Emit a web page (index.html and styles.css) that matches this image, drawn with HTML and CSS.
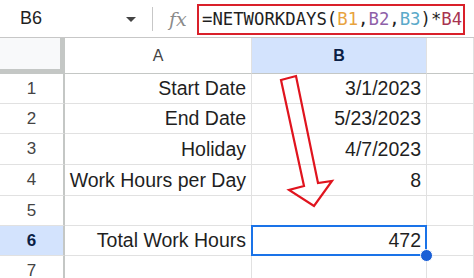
FILE: index.html
```html
<!DOCTYPE html>
<html lang="en">
<head>
    <meta charset="UTF-8">
    <title>NETWORKDAYS</title>
    <link rel="stylesheet" href="styles.css">
</head>
<body>
    <!-- formula bar -->
    <div class="toolbar">
        <div class="namebox">B6</div>
        <div class="caret"></div>
        <div class="divider"></div>
        <div class="fx">fx</div>
        <div class="formula">=NETWORKDAYS(<span class="r1">B1</span>,<span class="r2">B2</span>,<span class="r3">B3</span>)*<span class="r4">B4</span></div>
    </div>

    <!-- sheet -->
    <div class="sheet">
        <div class="corner"></div>
        <div class="colhead">A</div>
        <div class="colhead active">B</div>
        <div class="colhead"></div>

        <div class="rowhead">1</div>
        <div class="cell">Start Date</div>
        <div class="cell">3/1/2023</div>
        <div class="cell"></div>

        <div class="rowhead">2</div>
        <div class="cell">End Date</div>
        <div class="cell">5/23/2023</div>
        <div class="cell"></div>

        <div class="rowhead">3</div>
        <div class="cell">Holiday</div>
        <div class="cell">4/7/2023</div>
        <div class="cell"></div>

        <div class="rowhead">4</div>
        <div class="cell">Work Hours per Day</div>
        <div class="cell">8</div>
        <div class="cell"></div>

        <div class="rowhead">5</div>
        <div class="cell"></div>
        <div class="cell"></div>
        <div class="cell"></div>

        <div class="rowhead active">6</div>
        <div class="cell">Total Work Hours</div>
        <div class="cell selected">472</div>
        <div class="cell"></div>

        <div class="rowhead">7</div>
        <div class="cell"></div>
        <div class="cell"></div>
        <div class="cell"></div>

        <!-- red arrow drawn over the sheet -->
        <svg class="arrow" width="474" height="278" viewBox="0 0 474 278">
            <polygon points="281,81 296,77 318,184 332,182 314,207 289,191 304,187" fill="none" stroke="#e0141e" stroke-width="2.2" stroke-linejoin="miter"/>
        </svg>
    </div>
</body>
</html>
```

FILE: styles.css
```css
body {
    margin: 0;
    background: #fff;
    font-family: "Liberation Sans", Arial, sans-serif;
    color: #1f1f1f;
    overflow: hidden;
}

/* formula bar */
.toolbar {
    display: flex;
    align-items: center;
    height: 38px;
    border-bottom: 1px solid #c7c7c7;
    box-sizing: border-box;
}

.namebox {
    width: 106px;
    padding-left: 20px;
    font-size: 18px;
    color: #1f1f1f;
}

.caret {
    width: 0;
    height: 0;
    border-left: 5px solid transparent;
    border-right: 5px solid transparent;
    border-top: 5px solid #444;
    margin-top: 2px;
}

.divider {
    width: 1px;
    height: 24px;
    background: #c7c7c7;
    margin-left: 16px;
}

.fx {
    margin-left: 16px;
    width: 28px;
    font-family: "DejaVu Serif", "Liberation Serif", serif;
    font-style: italic;
    font-size: 19px;
    color: #8a8a8a;
}

.formula {
    width: 268px;
    height: 31px;
    box-sizing: border-box;
    margin-top: 2px;
    border: 2px solid #d9202a;
    padding-left: 3px;
    font-family: "DejaVu Sans Mono", "Liberation Mono", monospace;
    font-size: 17.3px;
    line-height: 27px;
    color: #1f1f1f;
    white-space: nowrap;
}

.r1 { color: #e8a33e; }
.r2 { color: #8e5fa8; }
.r3 { color: #5aa9c9; }
.r4 { color: #a8344f; }

/* sheet grid */
.sheet {
    position: relative;
    display: grid;
    grid-template-columns: 65px 187px 175px 1fr;
    grid-template-rows: 36px 30px 30px 31px 31px 30px 30px 30px;
}

.corner {
    background: #f8f9fa;
    border-right: 5px solid #c4c7c5;
    border-bottom: 5px solid #c4c7c5;
    box-sizing: border-box;
}

.colhead {
    display: flex;
    align-items: center;
    justify-content: center;
    border-right: 1px solid #e1e1e1;
    border-bottom: 1px solid #c4c7c5;
    font-size: 16px;
    color: #444;
    background: #fff;
}

.colhead.active {
    background: #d3e3fd;
    color: #0b1f45;
    font-weight: bold;
}

.rowhead {
    display: flex;
    align-items: center;
    justify-content: center;
    border-right: 2px solid #c4c7c5;
    border-bottom: 1px solid #e1e1e1;
    box-sizing: border-box;
    font-size: 17px;
    color: #444;
}

.rowhead.active {
    background: #d3e3fd;
    color: #0b1f45;
    font-weight: bold;
}

.cell {
    display: flex;
    align-items: center;
    justify-content: flex-end;
    padding-right: 5px;
    border-right: 1px solid #e1e1e1;
    border-bottom: 1px solid #e1e1e1;
    font-size: 19.5px;
    color: #1f1f1f;
    white-space: nowrap;
}

.cell.selected {
    position: relative;
}

.cell.selected::after {
    content: "";
    position: absolute;
    left: -1px;
    top: -1px;
    right: -1px;
    bottom: -1px;
    border: 2px solid #1a73e8;
}

.cell.selected::before {
    content: "";
    position: absolute;
    right: -7px;
    bottom: -7px;
    width: 11px;
    height: 11px;
    border-radius: 50%;
    background: #1a5fd6;
    border: 1px solid #fff;
    z-index: 2;
}

.arrow {
    position: absolute;
    left: 0;
    top: -39px;
    pointer-events: none;
}
```
